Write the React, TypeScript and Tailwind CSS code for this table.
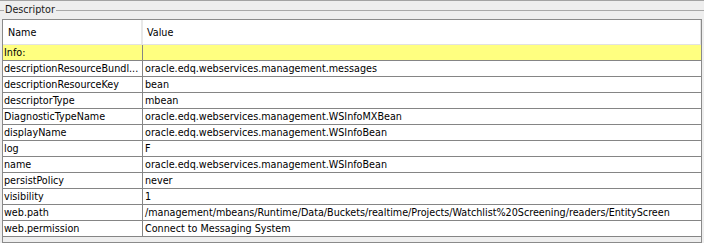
import React from "react";

const rows: [string, string][] = [
  ["descriptionResourceBundl...", "oracle.edq.webservices.management.messages"],
  ["descriptionResourceKey", "bean"],
  ["descriptorType", "mbean"],
  ["DiagnosticTypeName", "oracle.edq.webservices.management.WSInfoMXBean"],
  ["displayName", "oracle.edq.webservices.management.WSInfoBean"],
  ["log", "F"],
  ["name", "oracle.edq.webservices.management.WSInfoBean"],
  ["persistPolicy", "never"],
  ["visibility", "1"],
  [
    "web.path",
    "/management/mbeans/Runtime/Data/Buckets/realtime/Projects/Watchlist%20Screening/readers/EntityScreen",
  ],
  ["web.permission", "Connect to Messaging System"],
];

export default function App() {
  return (
    <div className="w-[704px] h-[243px] bg-[#eeeeee] border-t border-[#a3a3a3] overflow-hidden flex flex-col font-['DejaVu_Sans_Condensed','DejaVu_Sans',sans-serif] font-stretch-condensed text-[10.7px] text-black leading-none">
      <div className="h-[18px] flex items-center shrink-0 pt-[1px]">
        <div className="w-[4px] h-px bg-[#a8a8a8]" />
        <span className="px-[1px] text-[#1a1a1a]">Descriptor</span>
        <div className="flex-1 h-px bg-[#a8a8a8]" />
      </div>
      <div className="ml-[2px] w-[700px] flex-1 border border-[#8a8a8a] flex flex-col">
        <div className="h-[25px] bg-white border-b border-[#e2e2e2] flex shrink-0">
          <div className="w-[138px] flex items-center pl-[5px] pt-[3px]">Name</div>
          <div className="w-[2px] bg-[#e8e8e8]" />
          <div className="flex-1 flex items-center pl-[4px] pt-[3px] border-r border-[#e2e2e2]">Value</div>
        </div>
        <div className="h-[16px] flex bg-[#ffff80] border-b border-[#858585] shrink-0">
          <div className="w-[140px] border-r border-[#858585] flex items-center pl-[1px] pt-[2px]">Info:</div>
          <div className="flex-1" />
        </div>
        {rows.map(([k, v]) => (
          <div key={k} className="h-[16px] flex bg-white border-b border-[#858585] shrink-0">
            <div className="w-[140px] border-r border-[#858585] flex items-center pl-[1px] pt-[2px] whitespace-nowrap overflow-hidden">
              {k}
            </div>
            <div className="flex-1 flex items-center pl-[2px] pt-[2px] whitespace-nowrap overflow-hidden">{v}</div>
          </div>
        ))}
      </div>
    </div>
  );
}
